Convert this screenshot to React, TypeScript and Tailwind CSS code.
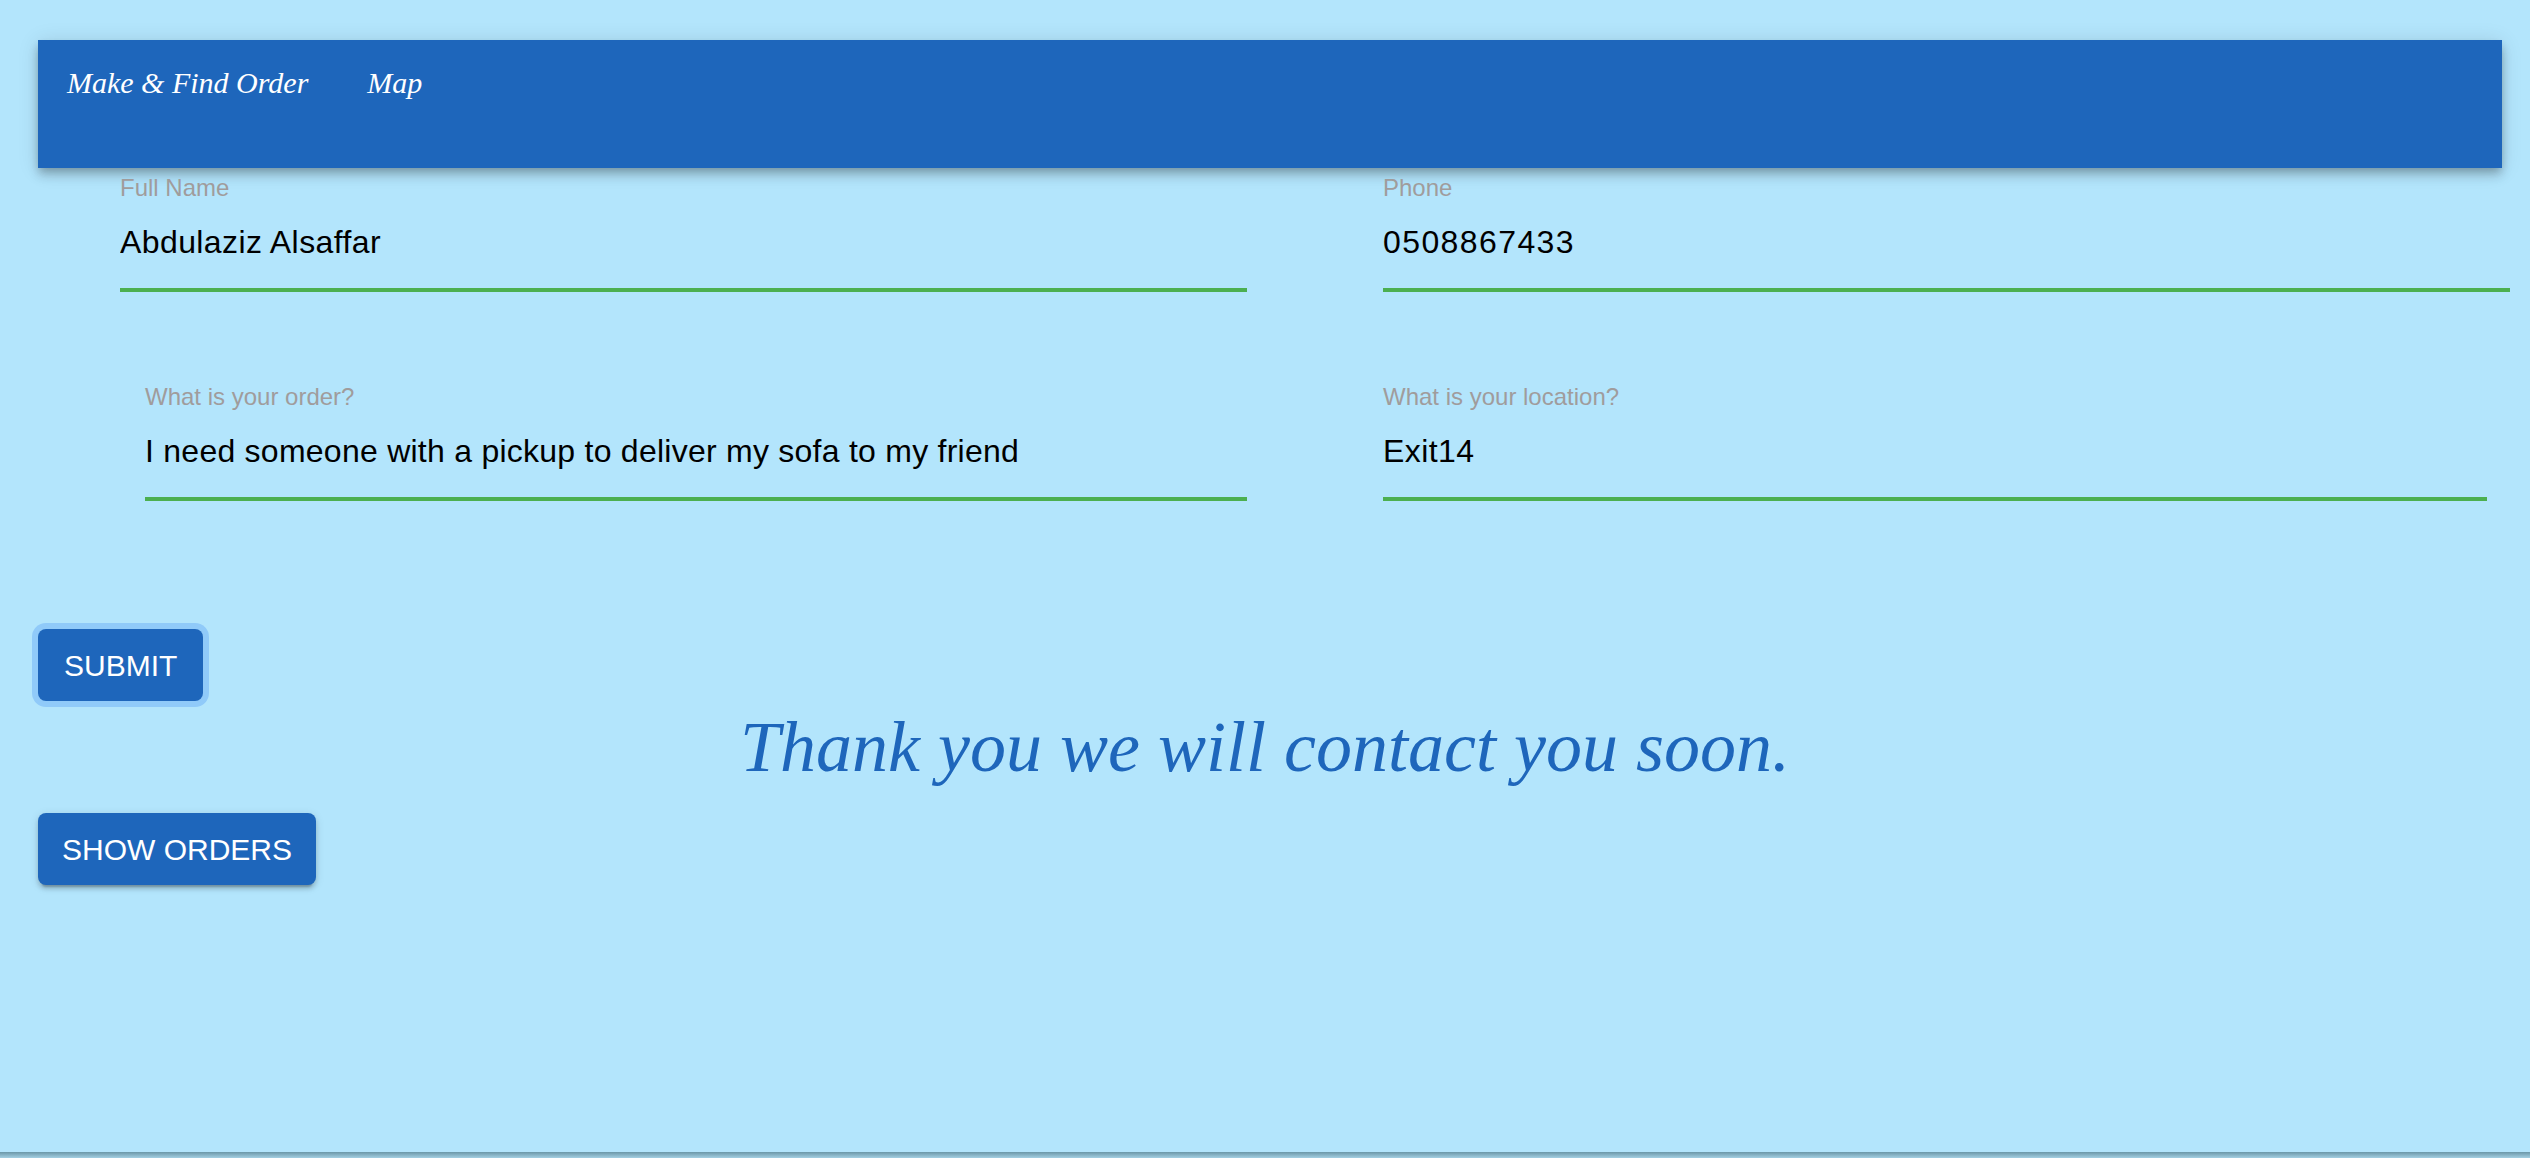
import React from 'react';

type FieldProps = {
  label: string;
  value: string;
  className?: string;
  inputClass?: string;
};

const sans = 'font-["Liberation_Sans",Arial,Helvetica,sans-serif]';
const serif = 'font-["Liberation_Serif","Times_New_Roman",serif]';

function Field({ label, value, className = '', inputClass = 'tracking-[0.4px]' }: FieldProps) {
  return (
    <div className={`flex flex-col ${className}`}>
      <label className={`${sans} text-[24px] leading-[28px] text-[#a09c9c]`}>{label}</label>
      <div className="mt-[20px] pb-[26px] border-b-4 border-[#4caf50]">
        <input
          readOnly
          value={value}
          className={`${sans} ${inputClass} block w-full h-[40px] bg-transparent text-[32px] leading-[40px] text-black outline-none`}
        />
      </div>
    </div>
  );
}

export default function App() {
  return (
    <div className="h-screen flex flex-col bg-[#b3e5fc] overflow-hidden">
      <main className="flex-1">
        {/* top bar */}
        <header className="mt-[40px] ml-[38px] mr-[28px] h-[128px] bg-[#1e66bb] pt-[26px] pl-[29px] shadow-[0_4px_8px_-2px_rgba(0,0,0,0.2),0_8px_10px_0_rgba(0,0,0,0.14),0_2px_20px_0_rgba(0,0,0,0.12)]">
          <nav className={`${serif} flex gap-[59px] text-[30px] leading-[34px] italic text-white`}>
            <a className="cursor-pointer">Make &amp; Find Order</a>
            <a className="cursor-pointer">Map</a>
          </nav>
        </header>

        {/* order form */}
        <div className="pl-[120px] pr-[20px]">
          <div className="mt-[6px] grid grid-cols-2 gap-x-[136px]">
            <Field label="Full Name" value="Abdulaziz Alsaffar" />
            <Field label="Phone" value="0508867433" inputClass="tracking-[1.4px]" />
          </div>
          <div className="mt-[91px] grid grid-cols-2 gap-x-[136px]">
            <Field
              label="What is your order?"
              value="I need someone with a pickup to deliver my sofa to my friend"
              className="pl-[25px]"
              inputClass="tracking-[0.25px]"
            />
            <Field label="What is your location?" value="Exit14" className="pr-[23px]" />
          </div>
        </div>

        <div className="mt-[128px] px-[38px] flex flex-col">
          <div>
            <button
              className={`${sans} h-[72px] px-[26px] rounded-[8px] bg-[#1e66bb] text-[30px] text-white uppercase ring-[6px] ring-[#90caf9]`}
            >
              Submit
            </button>
          </div>
          <p className={`${serif} mt-[8px] text-center text-[72px] leading-[76px] italic text-[#1e66bb]`}>
            Thank you we will contact you soon.
          </p>
          <div className="mt-[28px]">
            <button
              className={`${sans} h-[72px] px-[24px] rounded-[8px] bg-[#1e66bb] text-[30px] text-white uppercase shadow-[0_6px_2px_-4px_rgba(0,0,0,0.2),0_4px_4px_0_rgba(0,0,0,0.14),0_2px_10px_0_rgba(0,0,0,0.12)]`}
            >
              Show Orders
            </button>
          </div>
        </div>
      </main>
      <div className="h-[6px] bg-gradient-to-b from-[#6b97a8] to-[#a4d0e3]" />
    </div>
  );
}
